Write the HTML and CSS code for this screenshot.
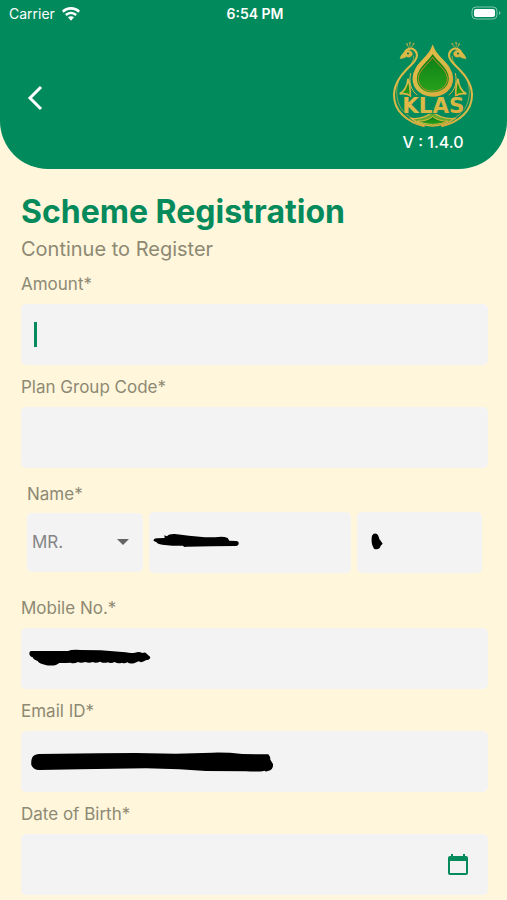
FILE: index.html
```html
<!DOCTYPE html>
<html lang="en">
<head>
    <meta charset="UTF-8">
    <meta name="viewport" content="width=device-width, initial-scale=1.0">
    <title>Scheme Registration</title>
    <link rel="stylesheet" href="styles.css">
</head>
<body>
    <header>
        <div class="status-bar">
            <div class="carrier">
                <span>Carrier</span>
                <svg width="18" height="14" viewBox="0 0 54 42" fill="#fff">
                    <path d="M27 0C16 0 7 4 0 11l5 6c6-6 13-9 22-9s16 3 22 9l5-6C47 4 38 0 27 0z"/>
                    <path d="M27 14c-7 0-13 3-18 7l5 6c4-3 8-5 13-5s9 2 13 5l5-6c-5-4-11-7-18-7z"/>
                    <path d="M27 28c-4 0-7 1-9 3l9 10 9-10c-2-2-5-3-9-3z"/>
                </svg>
            </div>
            <time>6:54 PM</time>
            <div class="battery">
                <svg width="30" height="15" viewBox="0 0 30 15">
                    <rect x="1" y="1" width="25" height="12" rx="4" fill="none" stroke="#7fc4ab" stroke-width="1"/>
                    <rect x="3" y="3" width="21" height="8" rx="2" fill="#fff"/>
                    <path d="M28 5v4c2-1 2-3 0-4z" fill="#7fc4ab"/>
                </svg>
            </div>
        </div>
        <div class="top-row">
            <button type="button" class="back" aria-label="Back">
                <svg width="18" height="26" viewBox="0 0 18 26" fill="none" stroke="#fff" stroke-width="3">
                    <path d="M15 2L4 13l11 11"/>
                </svg>
            </button>
            <div class="brand">
                <svg width="82" height="87" viewBox="36 34 246 260" role="img" aria-label="KLAS">
                    <defs>
                        <linearGradient id="gold" x1="0" y1="0" x2="1" y2="1">
                            <stop offset="0" stop-color="#f0b545"/>
                            <stop offset="0.5" stop-color="#d5bb48"/>
                            <stop offset="1" stop-color="#e0a63a"/>
                        </linearGradient>
                        <linearGradient id="leaf" x1="0" y1="0" x2="0" y2="1">
                            <stop offset="0" stop-color="#0b7a16"/>
                            <stop offset="1" stop-color="#28a41c"/>
                        </linearGradient>
                    </defs>
                    <!-- left peacock -->
                    <g id="bird" fill="none" stroke="url(#gold)">
                        <path d="M72 76c3-20 22-25 33-14 12 13 3 29-10 42-24 23-52 51-53 90-1 48 37 82 92 95" stroke-width="6"/>
                        <path d="M101 78c2 15-11 31-24 43-18 17-27 40-27 67 1 38 19 65 53 81" stroke-width="2"/>
                        <path d="M76 66c-7 4-12 9-16 20 9-1 15-2 19-6 7 4 17 1 18-7 0-11-13-15-21-7z" fill="url(#gold)" stroke-width="2"/>
                        <circle cx="84" cy="71" r="3" fill="#01704a" stroke="none"/>
                        <path d="M86 54l-5-10m9 9l-1-14m5 15l6-11" stroke-width="2"/>
                        <circle cx="81" cy="43" r="2" stroke-width="2"/>
                        <circle cx="90" cy="39" r="2" stroke-width="2"/>
                        <circle cx="101" cy="42" r="2" stroke-width="2"/>
                        <path d="M84 147c-2 24-11 37-25 45 12-2 24 0 32 6 0-19-1-35-7-51z" fill="url(#leaf)" stroke-width="5"/>
                        <path d="M92 130c-6 26 0 51 20 66" stroke-width="3"/>
                    </g>
                    <use href="#bird" transform="matrix(-1 0 0 1 318 0)"/>
                    <!-- drop -->
                    <path d="M158 60c-13 29-54 49-54 86 0 28 23 48 54 48s55-20 55-48c0-37-42-57-55-86z" fill="url(#leaf)" stroke="url(#gold)" stroke-width="13"/>
                    <path d="M158 82c-11 20-43 38-43 64 0 22 18 38 43 38s44-16 44-38c0-26-33-44-44-64z" fill="none" stroke="#c2892d" stroke-width="3"/>
                    <!-- tail -->
                    <path d="M94 266c25 2 47-4 64-21 17 17 39 23 66 21-18 13-39 21-66 23-26-2-48-10-64-23z" fill="#66a92d" stroke="url(#gold)" stroke-width="4"/>
                    <path d="M112 274c20 0 34-4 46-14 12 10 26 14 46 14-13 5-27 9-46 10-19-1-33-5-46-10z" fill="url(#leaf)" stroke="url(#gold)" stroke-width="3"/>
                    <text x="160" y="251" text-anchor="middle" class="logo-text">KLAS</text>
                </svg>
                <span class="version">V : 1.4.0</span>
            </div>
        </div>
    </header>

    <main>
        <h1>Scheme Registration</h1>
        <p class="subtitle">Continue to Register</p>

        <form>
            <div class="field">
                <label for="amount">Amount*</label>
                <div class="control">
                    <input type="text" id="amount" inputmode="decimal">
                    <span class="caret"></span>
                </div>
            </div>

            <div class="field">
                <label for="plan">Plan Group Code*</label>
                <div class="control">
                    <input type="text" id="plan">
                </div>
            </div>

            <div class="field name-field">
                <label for="first-name">Name*</label>
                <div class="name-row">
                    <div class="control title-control">
                        <select aria-label="Title">
                            <option>MR.</option>
                            <option>MRS.</option>
                            <option>MS.</option>
                        </select>
                        <svg class="arrow" width="12" height="6" viewBox="0 0 12 6" fill="#636363"><path d="M0 0h12L6 6z"/></svg>
                    </div>
                    <div class="control first-control">
                        <input type="text" id="first-name">
                        <svg class="mark" width="86" height="16" viewBox="0 0 258 48">
                            <path d="M1 22q3-7 12-6l22-1-1-8 8 3q6-8 24-7l42 5 48 5 30 0q24-4 38 2l5 8 20 1q9 1 8 8-1 7-12 7l-70 1-76 1q-5 3-9-3l-32 0-30-3q-15-2-18-8-8-2-9-5z"/>
                        </svg>
                    </div>
                    <div class="control initial-control">
                        <input type="text" aria-label="Initial">
                        <svg class="mark" width="12" height="18" viewBox="0 0 36 54">
                            <path d="M3 8q5-9 15-5 4 3 6 11 1 6 5 9l6 9q-7 5-9 13-8 6-17 2l-5-10q-4-14-1-29z"/>
                        </svg>
                    </div>
                </div>
            </div>

            <div class="field">
                <label for="mobile">Mobile No.*</label>
                <div class="control">
                    <input type="tel" id="mobile">
                    <svg class="mark" width="123" height="18" viewBox="0 0 369 54">
                        <path d="M1 13q0-8 8-7l108 0q10-5 38-3l60 1 75 6q15 3 28 1 13-4 22 1 8-4 13 2l10 9q3 5-5 9-9 1-13 5-9 5-16 0l-14 6q-14 2-20-3-9 5-16 1-12 4-22-2-11 6-21 1-10 4-23-2-12 6-22 1-10 4-22 0-14 4-22 0-13 6-22 2-13 1-34 1l-10 6q-17 4-34-1-17-3-21-11-12-3-15-11-10-3-10-12z"/>
                    </svg>
                </div>
            </div>

            <div class="field">
                <label for="email">Email ID*</label>
                <div class="control">
                    <input type="email" id="email">
                    <svg class="mark" width="247" height="20" viewBox="0 0 741 60">
                        <path d="M8 21q3-14 22-15l180-2 110-1 120 2 110-3q46-1 90 4l78 1q6 6 6 16l8 13q2 17-15 21-7 3-11-1-13 4-55 2l-120-1-80-5-100-3-200 3-120 2q-18 0-24-15-1-9 1-18z"/>
                    </svg>
                </div>
            </div>

            <div class="field">
                <label for="dob">Date of Birth*</label>
                <div class="control">
                    <input type="text" id="dob">
                    <button type="button" class="calendar" aria-label="Pick a date">
                        <svg width="20" height="21" viewBox="0 0 20 21">
                            <path fill="#058a5b" d="M3 0h2v2h10V0h2v2h1q2 0 2 2v15q0 2-2 2H2q-2 0-2-2V4q0-2 2-2h1zM2 7v12h16V7z"/>
                        </svg>
                    </button>
                </div>
            </div>
        </form>
    </main>
</body>
</html>
```

FILE: styles.css
```css
* {
    box-sizing: border-box;
}

body {
    font-family: Inter, 'Liberation Sans', sans-serif;
    margin: 0;
    background-color: #fff6dc;
    color: #8d8973;
}

header {
    background: #018a5b;
    color: white;
    padding-bottom: 15px;
    border-radius: 0 0 48px 48px;
}

.status-bar {
    display: grid;
    grid-template-columns: 1fr auto 1fr;
    align-items: center;
    height: 27px;
    padding: 0 6px 0 9px;
    font-size: 14px;
}

.status-bar time {
    font-weight: 600;
}

.carrier {
    display: flex;
    align-items: center;
    gap: 7px;
}

.battery {
    display: flex;
    justify-content: flex-end;
}

.top-row {
    display: flex;
    justify-content: space-between;
    align-items: center;
    padding: 14px 33px 0 20px;
}

button {
    display: flex;
    background: none;
    border: none;
    padding: 0;
    cursor: pointer;
}

.back {
    padding: 6px;
}

.brand {
    display: flex;
    flex-direction: column;
    align-items: center;
    gap: 2px;
}

.logo-text {
    font-family: 'DejaVu Sans', sans-serif;
    font-size: 64px;
    font-weight: bold;
    fill: url(#gold);
    stroke: #018a5b;
    stroke-width: 5px;
    paint-order: stroke;
}

.version {
    font-size: 16px;
    line-height: 24px;
    font-weight: 500;
}

main {
    padding: 23px 19px 5px 21px;
}

h1 {
    margin: 0;
    font-size: 32px;
    line-height: 40px;
    font-weight: 700;
    color: #058a5b;
}

.subtitle {
    margin: 3px 0 9px;
    font-size: 20px;
    line-height: 28px;
}

form {
    display: flex;
    flex-direction: column;
    gap: 10px;
}

.field label {
    display: block;
    margin-bottom: 8px;
    font-size: 17px;
    line-height: 24px;
}

.control {
    position: relative;
    height: 61px;
}

input,
select {
    display: block;
    width: 100%;
    height: 100%;
    margin: 0;
    padding: 0 12px;
    border: none;
    border-radius: 5px;
    outline: none;
    background: #f3f3f3;
    color: #333;
    font-family: inherit;
    font-size: 17px;
}

select {
    appearance: none;
    padding: 0 5px 2px;
    color: #858585;
}

.caret {
    position: absolute;
    left: 13px;
    top: 18px;
    width: 3px;
    height: 25px;
    background: #058a5b;
}

.name-field {
    padding: 4px 6px 13px;
}

.name-field label {
    margin-bottom: 6px;
}

.name-row {
    display: flex;
    align-items: center;
    gap: 6px;
}

.title-control {
    flex: 116;
    height: 59px;
}

.first-control {
    flex: 202;
}

.initial-control {
    flex: 125;
}

.arrow {
    position: absolute;
    right: 14px;
    top: 26px;
}

/* scribbles over the private values */
.mark {
    position: absolute;
    left: 8px;
    top: 21px;
}

.first-control .mark {
    left: 4px;
}

.initial-control .mark {
    left: 14px;
}

.calendar {
    position: absolute;
    right: 20px;
    top: 20px;
}
```
